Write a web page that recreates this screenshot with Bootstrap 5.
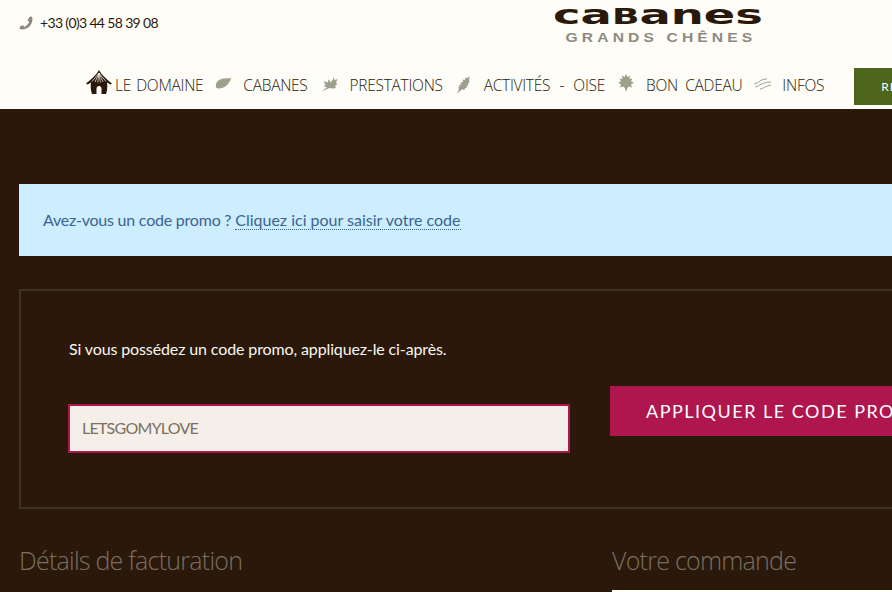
<!DOCTYPE html>
<html lang="fr">
<head>
<meta charset="utf-8">
<title>Cabanes Grands Chênes</title>
<link href="https://cdn.jsdelivr.net/npm/bootstrap@5.3.0/dist/css/bootstrap.min.css" rel="stylesheet">
<style>
html,body{height:592px;overflow:hidden}
body{background:#2a190b;font-family:Lato,"Liberation Sans",sans-serif;font-size:16px;width:892px}
.sheet{width:1240px}
.site-head{background:#fffdf8;height:109px;color:#2a190b;position:relative}
.top-line{height:68px;padding-left:19px}
.tel{font-size:14px;letter-spacing:-.65px;padding-top:14px;gap:7px;line-height:17px;width:536px}
.tel svg{width:14px;height:14px;margin-top:2px}
.brand{width:206px;text-align:center;overflow:visible}
.brand-a{font-family:"DejaVu Sans",sans-serif;font-weight:700;font-size:27px;line-height:26px;display:block;transform:scaleX(1.72);transform-origin:center;height:24px;white-space:nowrap;margin-top:2px}
.brand-a b{font-size:21px}
.brand-b{font-family:"Liberation Sans",sans-serif;font-weight:700;font-size:13px;line-height:14px;letter-spacing:3.45px;color:#8c8a7d;display:block;white-space:nowrap;margin-top:5px;padding-left:5px;transform:scaleX(1.2);transform-origin:center}
.main-nav{padding-left:86px;align-items:flex-start;height:41px}
.main-nav a{font-family:"Open Sans",Lato,sans-serif;font-weight:300;font-size:15.5px;letter-spacing:-.28px;word-spacing:1.5px;color:#2a190b;text-decoration:none;white-space:nowrap;line-height:20px;padding-top:7px}
.main-nav a.gap-more{word-spacing:5.5px}
.main-nav a.gap-some{word-spacing:3.5px}
.nav-ic{display:block;flex:none;margin-top:8px}
.resa{background:#4d661c;color:#fffdf8;font-size:12px;letter-spacing:1px;width:140px;height:37px;margin-left:30px;line-height:37px;padding:0 0 0 27px;border-radius:0;border:0;text-align:left;white-space:nowrap}
.wrap{padding:75px 0 0 19px}
.promo-note{background:#cceeff;color:#3d6391;height:72px;padding:0 24px;line-height:72px;letter-spacing:-.22px}
.promo-note a{color:#3d6391;text-decoration:none;border-bottom:1px dotted #3d6391;letter-spacing:0}
.coupon{border:2px solid #3f3124;height:220px;margin-top:33px;padding:47px 47px 0;color:#fbf6ef}
.coupon p{margin:0 0 26px 1px;line-height:22px;letter-spacing:-.12px}
.coupon-row{gap:40px;align-items:flex-start}
.code-input{width:502px;height:49px;margin-top:18px;background:#f4efe9;border:2px solid #b0164e;border-radius:0;color:#7b6f60;padding:0 12px 2px;font-size:16px;letter-spacing:-.75px;box-shadow:none}
.code-input:focus{background:#f4efe9;border-color:#b0164e;color:#7b6f60;box-shadow:none}
.apply{background:#b0164e;color:#fff;border:0;border-radius:0;width:400px;height:50px;padding:0 36px;text-align:left;font-size:18px;letter-spacing:1.5px;white-space:nowrap}
.apply:hover{background:#b0164e;color:#fff}
.bill{gap:0;margin-top:32px}
.bill h3{font-family:"Open Sans",Lato,sans-serif;font-weight:300;font-size:25px;letter-spacing:-.75px;line-height:38px;margin:0;color:#7a6f60}
.bill-l{width:593px}
.order-panel{background:#fffdf8;height:20px;margin-top:11px;width:500px}
</style>
</head>
<body>
<div class="sheet">
<header class="site-head">
  <div class="top-line d-flex">
    <div class="tel d-flex align-items-start">
      <svg viewBox="0 0 14 14"><path fill="#8c8a7d" d="M10.300 1.100l2.600-.6.600 2.600c0 5.800-4.600 10.400-10.400 10.400l-2.600-.6.600-2.700 3-.9 1.400 1.600c2-.9 3.800-2.800 4.700-4.800L8.500 4.400z"/></svg>
      <span>+33 (0)3 44 58 39 08</span>
    </div>
    <div class="brand">
      <span class="brand-a">ca<b>B</b>anes</span>
      <span class="brand-b">GRANDS CHÊNES</span>
    </div>
  </div>
  <nav class="main-nav d-flex">
    <svg class="nav-ic" style="margin-top:2px;margin-right:3px" width="26" height="24" viewBox="0 0 26 24"><path fill="#2a190b" d="M13 0C15 4 20 9 26 13.500L24.500 14.500 21 12.500C21.500 16 21.500 20 20 24H15.500V19C15.500 17 14.500 16 13 16S10.500 17 10.500 19V24H6C4.500 20 4.500 16 5 12.500L1.500 14.500 0 13.500C6 9 11 4 13 0z"/><path stroke="#fffdf8" stroke-width=".7" fill="none" d="M13 3L6 11.500M13 3L9 12M13 3L11.700 12.500M13 3L14.300 12.500M13 3L17 12M13 3L20 11.500"/></svg>
    <a href="#">LE DOMAINE</a>
    <svg class="nav-ic" style="margin-left:12px;margin-right:11px" width="17" height="16" viewBox="0 0 17 16"><path fill="#9da18a" d="M16.500 1.500C15 3 9 1.500 5 3.500S.5 9 1 11.500c2 1.800 7 1 10-1.500s4.500-6 5.500-8.500zM1 11.500L0 13z"/></svg>
    <a href="#">CABANES</a>
    <svg class="nav-ic" style="margin-left:14px;margin-right:12px" width="16" height="18" viewBox="0 0 16 18"><path fill="#9da18a" d="M0 15.500l5-4.500-3.500-.5L3.500 9 1.500 5l4 1.500L7 3l1.500 3.500L11 3.500 11.500 1l1 3 3-1-1.500 4 1.500 1-2.500 2 1 2-4 .5-2.500-.5-3.500 1.500z"/></svg>
    <a href="#">PRESTATIONS</a>
    <svg class="nav-ic" style="margin-left:14px;margin-right:14px" width="13" height="18" viewBox="0 0 13 18"><path fill="#9da18a" d="M0 18l2-5-1-1.500 1.500-.5L2 8.500l2 .5-.5-3 2 .5L6 3.500 8 4l.5-2.500 2 .5L13 0l-1 4 .5 2.500-1.500.5.500 2.500-1.500 0-.5 2.500-1.500 0L7.500 14 5 13.500 3 15z"/></svg>
    <a class="gap-more" href="#">ACTIVITÉS - OISE</a>
    <svg class="nav-ic" style="margin-left:13px;margin-right:12px;margin-top:6px" width="16" height="18" viewBox="0 0 16 18"><path fill="#9da18a" d="M8 0l1.500 3L12 1.500 11.500 5l3-.5L13 7.500l3 1-3 2 1 3-3.500-1-1.500 2.500L8 18l-1-3.500L5.500 12.500l-3.500 1 1-3-3-2 3-1L1.500 4.500l3 .5L4 1.500 6.500 3z"/></svg>
    <a class="gap-some" href="#">BON CADEAU</a>
    <svg class="nav-ic" style="margin-left:12px;margin-right:10px;margin-top:10px" width="18" height="12" viewBox="0 0 18 12"><path fill="none" stroke="#9da18a" d="M0 6c5-1 6-5 13-5M1 9c5-1 7-5 16-5M6 11c3 0 5-3 11-4"/></svg>
    <a href="#">INFOS</a>
    <button class="btn resa" type="button">RÉSERVER</button>
  </nav>
</header>
<main class="wrap">
  <div class="promo-note">Avez-vous un code promo ? <a href="#">Cliquez ici pour saisir votre code</a></div>
  <form class="coupon">
    <p>Si vous possédez un code promo, appliquez-le ci-après.</p>
    <div class="coupon-row d-flex">
      <input class="form-control code-input flex-shrink-0" type="text" value="LETSGOMYLOVE">
      <button class="btn apply flex-shrink-0" type="button">APPLIQUER LE CODE PROMO</button>
    </div>
  </form>
  <div class="bill d-flex">
    <div class="bill-l"><h3>Détails de facturation</h3></div>
    <div><h3>Votre commande</h3><div class="order-panel"></div></div>
  </div>
</main>
</div>
</body>
</html>
